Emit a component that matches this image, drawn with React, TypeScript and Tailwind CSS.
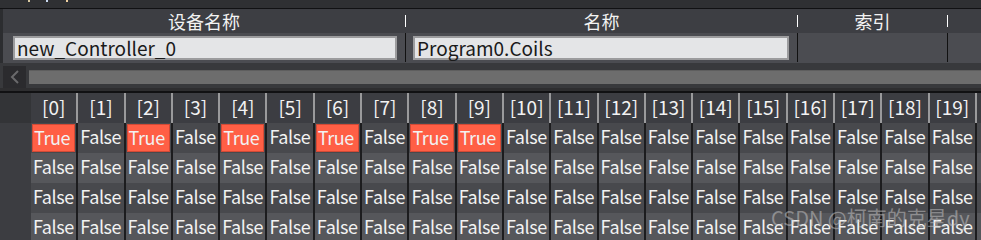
import React from "react";

const cols = Array.from({ length: 21 }, (_, i) => i);
const trueCols = [0, 2, 4, 6, 8, 9];
const rows = [0, 1, 2, 3];

const font = { fontFamily: '"Noto Sans CJK SC", "Noto Sans", sans-serif' };

function Chevron() {
  return (
    <svg width="10" height="14" viewBox="0 0 10 14">
      <path d="M8 1 L2 7 L8 13" stroke="#6a6a6c" strokeWidth="2" fill="none" />
    </svg>
  );
}

export default function App() {
  return (
    <div
      className="relative w-[981px] h-[240px] overflow-hidden bg-[#3c3d42] text-[#f2f2f2]"
      style={font}
    >
      {/* top strip, cut off */}
      <div className="h-[8px] bg-[#2f3033] relative">
        <span className="absolute left-[28px] top-0 w-[2px] h-[2px] bg-[#d9c9a0]" />
        <span className="absolute left-[46px] top-0 w-[2px] h-[2px] bg-[#c9d9f0]" />
        <span className="absolute left-[66px] top-0 w-[2px] h-[2px] bg-[#f0d0a0]" />
      </div>
      <div className="h-[1px] bg-[#111113]" />

      {/* column headings */}
      <div className="flex h-[24px] bg-[#3d3e43] text-[18px] leading-[24px]">
        <div className="w-[3px] bg-[#2c2d30]" />
        <div className="w-[402px] text-center">设备名称</div>
        <div className="w-[1px] flex items-center"><div className="w-[1px] h-[12px] bg-white" /></div>
        <div className="w-[391px] text-center">名称</div>
        <div className="w-[1px] flex items-center"><div className="w-[1px] h-[12px] bg-white" /></div>
        <div className="w-[149px] text-center">索引</div>
        <div className="w-[1px] flex items-center"><div className="w-[1px] h-[12px] bg-white" /></div>
      </div>

      {/* values */}
      <div className="flex h-[30px] bg-[#4b4c51] text-[19px] text-[#1a1a1a]">
        <div className="w-[3px] bg-[#2c2d30]" />
        <div className="w-[402px] pl-[10px] pt-[3px]">
          <div className="w-[384px] h-[24px] bg-[#e4e5e7] border-2 border-[#9c9c9e] pl-[2px] leading-[19px]">
            new_Controller_0
          </div>
        </div>
        <div className="w-[1px] h-[29px] bg-[#111]" />
        <div className="w-[391px] pl-[7px] pt-[3px]">
          <div className="w-[376px] h-[24px] bg-[#e4e5e7] border-2 border-[#9c9c9e] pl-[2px] leading-[19px]">
            Program0.Coils
          </div>
        </div>
        <div className="w-[1px] h-[29px] bg-[#111]" />
        <div className="w-[149px]" />
        <div className="w-[1px] h-[29px] bg-[#111]" />
      </div>

      {/* horizontal scrollbar */}
      <div className="h-[3px] bg-[#38393c]" />
      <div className="flex h-[22px] bg-[#38393c]">
        <div className="ml-[3px] w-[23px] bg-[#2b2b2e] flex items-center justify-center">
          <Chevron />
        </div>
        <div className="flex-1 pl-[3px] py-[4px] bg-[#38393c]">
          <div className="h-full bg-[#6d6d6d] border-t border-[#5e5e5e]" />
        </div>
      </div>
      <div className="h-[3px] bg-[#2e2e30]" />
      <div className="h-[2px] bg-[#111113]" />

      {/* array grid */}
      <div className="flex">
        <div className="w-[31px] shrink-0">
          <div className="h-[30px] bg-[#333437]" />
          <div className="h-[120px] bg-[#3c3d41]" />
        </div>
        <div className="flex">
          {cols.map((c) => {
            const partial = c === 20;
            return (
              <div key={c} className="w-[47.3px] shrink-0">
                <div className="h-[30px] bg-[#3c3d42] border-r-2 border-[#9a9a9c] text-center text-[19px] leading-[28px]">
                  {partial ? null : `[${c}]`}
                </div>
                {rows.map((r) => {
                  const isTrue = r === 0 && trueCols.includes(c);
                  return (
                    <div
                      key={r}
                      className={`h-[30px] border-r-2 border-[#1c1c1e] p-[1px] ${
                        r % 2 === 0 ? "bg-[#48494d]" : "bg-[#56575b]"
                      }`}
                    >
                      <div
                        className={`h-full text-[18px] tracking-[-0.4px] leading-[25px] pl-[1px] whitespace-nowrap overflow-hidden ${
                          isTrue ? "bg-[#ff5f45] border border-[#d24a36]" : ""
                        }`}
                      >
                        {partial ? null : isTrue ? "True" : "False"}
                      </div>
                    </div>
                  );
                })}
              </div>
            );
          })}
        </div>
      </div>

      {/* watermark */}
      <div className="absolute left-[771px] top-[203px] text-[20px] leading-[30px] text-[#c8c8c8]/50 whitespace-nowrap">
        CSDN @柯南的克星dy
      </div>
    </div>
  );
}
